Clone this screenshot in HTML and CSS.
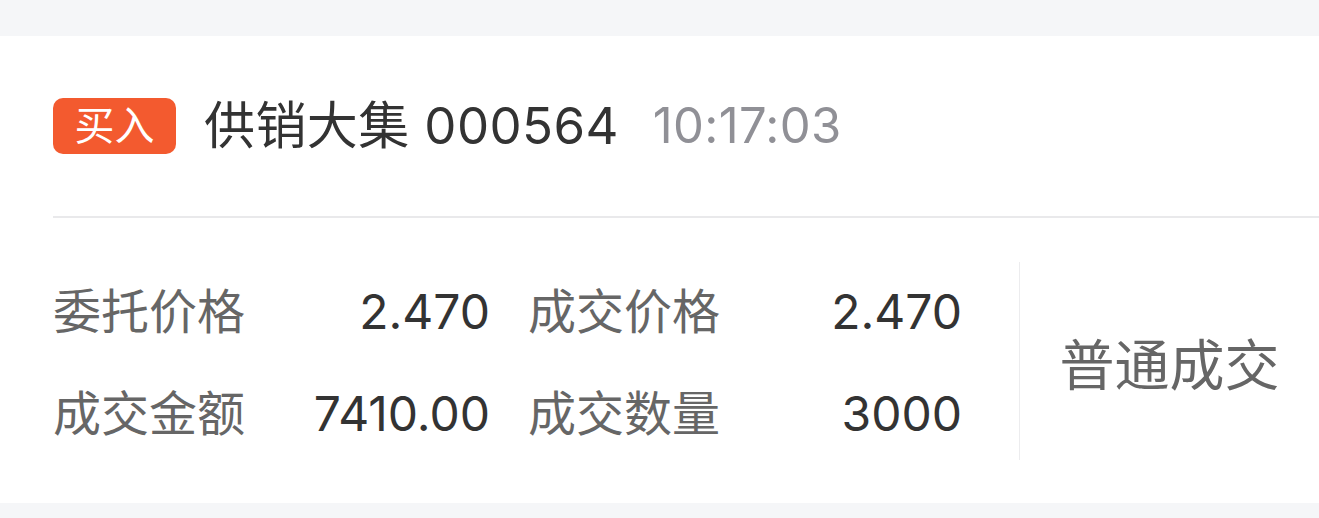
FILE: index.html
```html
<!DOCTYPE html>
<html lang="zh-CN">
<head>
  <meta charset="UTF-8" />
  <meta name="viewport" content="width=device-width, initial-scale=1.0" />
  <title>成交明细</title>
  <link rel="stylesheet" href="styles.css">
</head>
<body>
  <main class="deal-card">
    <div class="deal-header">
      <span class="badge">买入</span>
      <span class="stock-name">供销大集 000564</span>
      <span class="deal-time">10:17:03</span>
    </div>

    <div class="deal-body">
      <div class="stats">
        <div class="stat">
          <span class="stat-label">委托价格</span>
          <span class="stat-value">2.470</span>
        </div>
        <div class="stat">
          <span class="stat-label">成交价格</span>
          <span class="stat-value">2.470</span>
        </div>
        <div class="stat">
          <span class="stat-label">成交金额</span>
          <span class="stat-value">7410.00</span>
        </div>
        <div class="stat">
          <span class="stat-label">成交数量</span>
          <span class="stat-value">3000</span>
        </div>
      </div>
      <div class="vline"></div>
      <div class="deal-type">普通成交</div>
    </div>
  </main>
</body>
</html>
```

FILE: styles.css
```css
body {
  font-family: 'Inter', 'Noto Sans CJK SC', sans-serif;
  margin: 0;
  padding: 0;
  background: #f5f6f8;
  color: #333;
}

.deal-card {
  margin-top: 36px;
  background: #fff;
}

.deal-header {
  display: flex;
  align-items: center;
  height: 180px;
  margin-left: 53px;
  border-bottom: 2px solid #e9e9eb;
}

.badge {
  display: flex;
  align-items: center;
  justify-content: center;
  width: 123px;
  height: 56px;
  border-radius: 10px;
  background: #f35a2f;
  color: #fff;
  font-size: 40px;
  line-height: 1;
}

.stock-name {
  margin-left: 28px;
  font-size: 51px;
  line-height: 1.2;
  color: #333;
  letter-spacing: 0.4px;
}

.deal-time {
  margin-left: 34px;
  font-size: 49px;
  line-height: 1.2;
  color: #909096;
  letter-spacing: 0.3px;
}

.deal-body {
  display: flex;
  align-items: center;
  height: 285px;
  padding-left: 53px;
}

.stats {
  display: grid;
  grid-template-columns: 437px 434px;
  column-gap: 38px;
  row-gap: 42px;
  margin-top: 4px;
}

.stat {
  display: flex;
  justify-content: space-between;
  font-size: 48px;
  line-height: 60px;
}

.stat-label {
  color: #666;
}

.stat-value {
  color: #333;
}

.vline {
  width: 1px;
  height: 198px;
  margin-left: 57px;
  background: #ececee;
}

.deal-type {
  flex: 1;
  text-align: center;
  font-size: 55px;
  color: #666;
}
```
